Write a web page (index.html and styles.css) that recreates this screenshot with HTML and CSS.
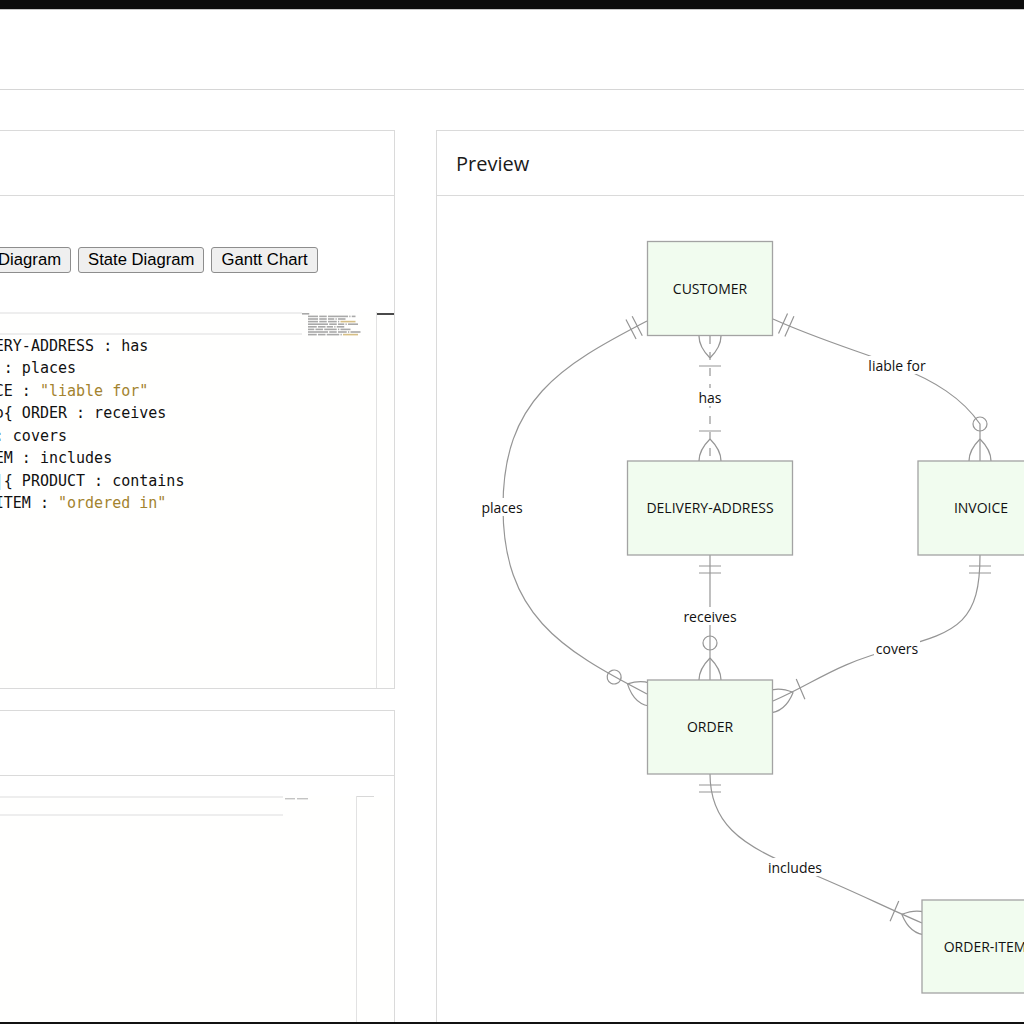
FILE: index.html
```html
<!DOCTYPE html>
<html lang="en">
<head>
<meta charset="utf-8">
<title>Mermaid Live Editor</title>
<link rel="stylesheet" href="styles.css">
</head>
<body>
<div class="frame-top"></div>
<header class="topbar"></header>
<main class="main">
  <section class="col-left">
    <div class="panel panel-code">
      <div class="panel-head"><h2 class="panel-title">Code</h2></div>
      <div class="panel-body code-body">
        <div class="samples">
          <button class="btn">Flowchart</button>
          <button class="btn">Sequence Diagram</button>
          <button class="btn">Class Diagram</button>
          <button class="btn">State Diagram</button>
          <button class="btn">Gantt Chart</button>
        </div>
        <div class="editor editor-code">
          <div class="gutter">
            <div class="ln">1</div><div class="ln">2</div><div class="ln">3</div><div class="ln">4</div><div class="ln">5</div><div class="ln">6</div><div class="ln">7</div><div class="ln">8</div><div class="ln">9</div>
          </div>
          <div class="lines">
            <div class="line current">erDiagram</div>
            <div class="line">    CUSTOMER }|..|{ DELIVERY-ADDRESS : has</div>
            <div class="line">    CUSTOMER ||--o{ ORDER : places</div>
            <div class="line">    CUSTOMER ||--o{ INVOICE : <span class="str">"liable for"</span></div>
            <div class="line">    DELIVERY-ADDRESS ||--o{ ORDER : receives</div>
            <div class="line">    INVOICE ||--|{ ORDER : covers</div>
            <div class="line">    ORDER ||--|{ ORDER-ITEM : includes</div>
            <div class="line">    PRODUCT-CATEGORY ||--|{ PRODUCT : contains</div>
            <div class="line">    PRODUCT ||--o{ ORDER-ITEM : <span class="str">"ordered in"</span></div>
          </div>
          <div class="minimap">
            <svg class="mini" width="74" height="30" viewBox="0 0 74 30">
              <g class="mtok">
                <rect x="-4" y="1" width="11.25" height="1.6"/>
                <rect x="6" y="3.6" width="10" height="1.6"/><rect x="17.25" y="3.6" width="7.5" height="1.6"/><rect x="26" y="3.6" width="20" height="1.6"/><rect x="47.25" y="3.6" width="1.25" height="1.6"/><rect x="49.75" y="3.6" width="3.75" height="1.6"/>
                <rect x="6" y="6.2" width="10" height="1.6"/><rect x="17.25" y="6.2" width="7.5" height="1.6"/><rect x="26" y="6.2" width="6.25" height="1.6"/><rect x="33.5" y="6.2" width="1.25" height="1.6"/><rect x="36" y="6.2" width="7.5" height="1.6"/>
                <rect x="6" y="8.8" width="10" height="1.6"/><rect x="17.25" y="8.8" width="7.5" height="1.6"/><rect x="26" y="8.8" width="8.75" height="1.6"/><rect x="36" y="8.8" width="1.25" height="1.6"/>
                <rect x="6" y="11.4" width="20" height="1.6"/><rect x="27.25" y="11.4" width="7.5" height="1.6"/><rect x="36" y="11.4" width="6.25" height="1.6"/><rect x="43.5" y="11.4" width="1.25" height="1.6"/><rect x="46" y="11.4" width="10" height="1.6"/>
                <rect x="6" y="14" width="8.75" height="1.6"/><rect x="16" y="14" width="7.5" height="1.6"/><rect x="24.75" y="14" width="6.25" height="1.6"/><rect x="32.25" y="14" width="1.25" height="1.6"/><rect x="34.75" y="14" width="7.5" height="1.6"/>
                <rect x="6" y="16.6" width="6.25" height="1.6"/><rect x="13.5" y="16.6" width="7.5" height="1.6"/><rect x="22.25" y="16.6" width="12.5" height="1.6"/><rect x="36" y="16.6" width="1.25" height="1.6"/><rect x="38.5" y="16.6" width="10" height="1.6"/>
                <rect x="6" y="19.2" width="20" height="1.6"/><rect x="27.25" y="19.2" width="7.5" height="1.6"/><rect x="36" y="19.2" width="8.75" height="1.6"/><rect x="46" y="19.2" width="1.25" height="1.6"/><rect x="48.5" y="19.2" width="10" height="1.6"/>
                <rect x="6" y="21.8" width="8.75" height="1.6"/><rect x="16" y="21.8" width="7.5" height="1.6"/><rect x="24.75" y="21.8" width="12.5" height="1.6"/><rect x="38.5" y="21.8" width="1.25" height="1.6"/>
              </g>
              <g class="mstr">
                <rect x="38.5" y="8.8" width="15" height="1.6"/>
                <rect x="41" y="21.8" width="15" height="1.6"/>
              </g>
            </svg>
          </div>
          <div class="ruler"><div class="ruler-cursor"></div></div>
        </div>
      </div>
    </div>
    <div class="panel panel-config">
      <div class="panel-head"><h2 class="panel-title">Mermaid Configuration</h2></div>
      <div class="panel-body config-body">
        <div class="editor editor-config">
          <div class="gutter"><div class="ln">1</div></div>
          <div class="lines">
            <div class="line current">{"theme": "default"}</div>
          </div>
          <div class="minimap">
            <svg class="mini" width="73" height="8" viewBox="0 0 73 8">
              <g class="mtok">
                <rect x="2" y="2" width="10" height="1.4"/>
                <rect x="14" y="2" width="11" height="1.4"/>
              </g>
            </svg>
          </div>
          <div class="ruler ruler-light"><div class="ruler-cursor"></div></div>
          <div class="editor-spacer"></div>
        </div>
      </div>
    </div>
  </section>
  <section class="col-right">
    <div class="panel panel-preview">
      <div class="panel-head"><h2 class="panel-title">Preview</h2></div>
      <div class="panel-body preview-body">
        <svg class="er" width="739" height="830" viewBox="437 196 739 830">
          <defs>
            <g id="m-one"><path d="M11,-11V11M18,-11V11"/></g>
            <g id="m-many1"><path d="M30,-11V11M22,0Q0,-22 -22,0M22,0Q0,22 -22,0"/></g>
            <g id="m-many0"><path d="M22,0Q0,-22 -22,0M22,0Q0,22 -22,0"/><circle cx="37" cy="0" r="7"/></g>
          </defs>
          <g class="rels">
            <path class="dashed" d="M710 336V461"/>
            <path d="M647 321C560 366 503 400 503 507S560 649 647 694"/>
            <path d="M773 319C822 341 862 352 897 366C935 381 962 398 980 424L980 461"/>
            <path d="M710 555V680"/>
            <path d="M980 555C980 620 960 632 897 648S815 683 773 701"/>
            <path d="M710 774C710 822 740 845 795 867S880 905 922 923"/>
          </g>
          <g class="marks">
            <use href="#m-many1" transform="translate(710 336) rotate(90)"/>
            <use href="#m-many1" transform="translate(710 461) rotate(-90)"/>
            <use href="#m-one" transform="translate(647 321) rotate(152.65)"/>
            <use href="#m-many0" transform="translate(647 694) rotate(-152.65)"/>
            <use href="#m-one" transform="translate(773 319) rotate(24.2)"/>
            <use href="#m-many0" transform="translate(980 461) rotate(-90)"/>
            <use href="#m-one" transform="translate(710 555) rotate(90)"/>
            <use href="#m-many0" transform="translate(710 680) rotate(-90)"/>
            <use href="#m-one" transform="translate(980 555) rotate(90)"/>
            <use href="#m-many1" transform="translate(773 701) rotate(-23.2)"/>
            <use href="#m-one" transform="translate(710 774) rotate(90)"/>
            <use href="#m-many1" transform="translate(922 923) rotate(203.2)"/>
          </g>
          <g class="lbl-bg">
            <rect x="697" y="388" width="26" height="18"/>
            <rect x="479" y="498" width="46" height="18"/>
            <rect x="865" y="356" width="64" height="18"/>
            <rect x="682" y="607" width="56" height="18"/>
            <rect x="874" y="639" width="46" height="18"/>
            <rect x="767" y="858" width="56" height="18"/>
          </g>
          <g class="lbl">
            <text x="710" y="397">has</text>
            <text x="502" y="507">places</text>
            <text x="897" y="365">liable for</text>
            <text x="710" y="616">receives</text>
            <text x="897" y="648">covers</text>
            <text x="795" y="867">includes</text>
          </g>
          <g class="ents">
            <rect x="647.5" y="241.5" width="125" height="94"/>
            <rect x="627.5" y="461" width="165" height="94"/>
            <rect x="918" y="461" width="126" height="94"/>
            <rect x="647.5" y="680" width="125" height="94"/>
            <rect x="922" y="900" width="126" height="93"/>
          </g>
          <g class="ent-lbl">
            <text x="710" y="288">CUSTOMER</text>
            <text x="710" y="507.5">DELIVERY-ADDRESS</text>
            <text x="981" y="507.5">INVOICE</text>
            <text x="710" y="726.5">ORDER</text>
            <text x="985" y="946">ORDER-ITEM</text>
          </g>
        </svg>
      </div>
    </div>
  </section>
</main>
<div class="frame-bottom"></div>
</body>
</html>
```

FILE: styles.css
```css
* { box-sizing: border-box; }
html, body { margin: 0; padding: 0; background: #fff; overflow: hidden; }
body { font-family: "Liberation Sans", Arial, sans-serif; color: #000; }

.frame-top { height: 10px; background: #0c0c0c; border-bottom: 1px solid #c6c6c6; }
.topbar { height: 80px; border-bottom: 1px solid #d6d6d6; background: #fff; }

.main {
  display: flex;
  gap: 41px;
  margin-left: -360px;
  padding-top: 40px;
  width: 1600px;
}
.col-left { width: 755px; flex: none; display: flex; flex-direction: column; gap: 21px; }
.col-right { width: 740px; flex: none; }

.panel { border: 1px solid #dadada; background: #fff; }
.panel-head {
  height: 65px;
  border-bottom: 1px solid #dadada;
  display: flex;
  align-items: center;
  padding: 0 19px;
}
.panel-title {
  margin: 0;
  font-family: "Open Sans", "Noto Sans", sans-serif;
  font-weight: 400;
  font-size: 20px;
  color: #1a1a1a;
}

.code-body { padding-top: 51px; }
.samples { display: flex; gap: 7px; padding-left: 32px; }
.btn {
  font-family: "Liberation Sans", Arial, sans-serif;
  font-size: 16.67px;
  height: 26px;
  padding: 0 9px;
  border: 1px solid #8d8d8d;
  border-radius: 3px;
  background: #efefef;
  color: #000;
  white-space: nowrap;
}

.editor {
  display: flex;
  font-family: "DejaVu Sans Mono", monospace;
  font-size: 15px;
  line-height: 22.5px;
  color: #111;
  background: #fffffe;
}
.editor-code { margin-top: 39px; height: 376px; }
.gutter { width: 128px; flex: none; text-align: right; padding-right: 40px; color: #237893; }
.ln { height: 22.5px; }
.lines { width: 533px; flex: none; overflow: hidden; }
.line { height: 22.5px; white-space: pre; }
.line.current { border-top: 2px solid #eeeeee; border-bottom: 2px solid #eeeeee; line-height: 18.5px; }
.str { color: #a3832f; }
.minimap { width: 74px; flex: none; }
.mini { display: block; }
.mtok { fill: #a9a9a9; }
.mstr { fill: #d6bf85; }
.ruler { width: 18px; flex: none; border-left: 1px solid #e2e2e2; }
.ruler-cursor { height: 2px; margin-top: 1px; background: #4a4a4a; }

.config-body { padding-top: 20px; }
.editor-config { height: 260px; line-height: 20px; }
.editor-config .ln, .editor-config .line { height: 20px; }
.editor-config .line.current { line-height: 16px; }
.editor-config .lines { width: 514px; }
.editor-config .minimap { width: 73px; }
.editor-config .mtok { fill: #c4c4c4; }
.ruler-light .ruler-cursor { height: 1px; margin-top: 0; background: #d8d8d8; }
.editor-spacer { width: 20px; flex: none; }

.preview-body { height: 830px; }
.er { display: block; }
.rels path { fill: none; stroke: #959595; stroke-width: 1.2; }
.rels .dashed { stroke-dasharray: 8 8; }
.marks use { fill: none; stroke: #959595; stroke-width: 1.2; }
.marks circle { fill: #fff; }
.lbl-bg rect { fill: #fff; }
.lbl text, .ent-lbl text {
  font-family: "Open Sans", "Noto Sans", sans-serif;
  font-size: 14px;
  fill: #111;
  text-anchor: middle;
  dominant-baseline: central;
}
.ents rect { fill: #f1fcef; stroke: #a3a3a3; stroke-width: 1.3; }

.frame-bottom { position: fixed; left: 0; right: 0; bottom: 0; height: 2px; background: #111; }
```
